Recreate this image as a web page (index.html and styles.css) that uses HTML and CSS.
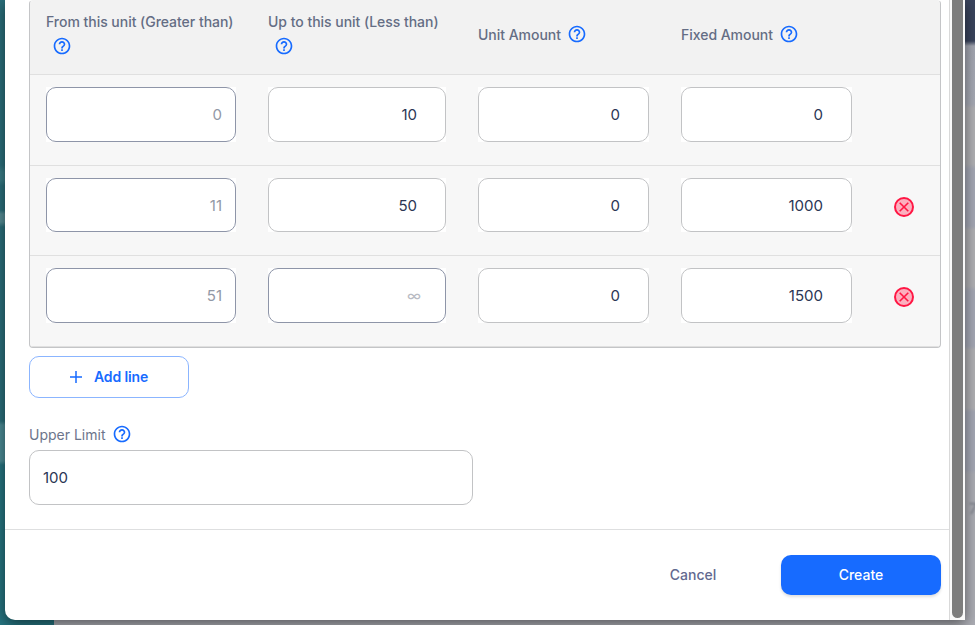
FILE: index.html
```html
<!DOCTYPE html>
<html lang="en">
<head>
<meta charset="utf-8">
<title>Pricing tiers</title>
<link rel="stylesheet" href="styles.css">
</head>
<body>
<svg class="sprite" aria-hidden="true">
  <symbol id="help" viewBox="0 0 24 24">
    <path d="M11 18h2v-2h-2v2zm1-16C6.48 2 2 6.48 2 12s4.480 10 10 10 10-4.480 10-10S17.520 2 12 2zm0 18c-4.410 0-8-3.590-8-8s3.590-8 8-8 8 3.590 8 8-3.590 8-8 8zm0-14c-2.210 0-4 1.790-4 4h2c0-1.100.900-2 2-2s2 .900 2 2c0 2-3 1.750-3 5h2c0-2.250 3-2.500 3-5 0-2.210-1.790-4-4-4z" fill="#176bff"/>
  </symbol>
  <symbol id="remove" viewBox="0 0 20 20">
    <circle cx="10" cy="10" r="9" fill="#fcb0bf" stroke="#ff1744" stroke-width="2"/>
    <path d="M5.700 5.700l8.600 8.600M14.300 5.700l-8.600 8.600" stroke="#ff1744" stroke-width="1.600"/>
  </symbol>
</svg>
<div class="backdrop">
  <div class="sidebar"></div>
  <div class="page"><span class="ghost">7</span></div>
</div>
<main class="modal">
  <div class="content">
    <section class="body">
      <div class="tiers">
        <div class="row head">
          <div class="th wrap"><span>From this unit (Greater than)</span><svg class="help"><use href="#help"/></svg></div>
          <div class="th wrap"><span>Up to this unit (Less than)</span><svg class="help"><use href="#help"/></svg></div>
          <div class="th"><span>Unit Amount</span><svg class="help"><use href="#help"/></svg></div>
          <div class="th"><span>Fixed Amount</span><svg class="help"><use href="#help"/></svg></div>
        </div>
        <div class="row">
          <div class="cell"><div class="field locked">0</div></div>
          <div class="cell"><div class="field">10</div></div>
          <div class="cell"><div class="field">0</div></div>
          <div class="cell"><div class="field">0</div></div>
        </div>
        <div class="row short">
          <div class="cell"><div class="field locked">11</div></div>
          <div class="cell"><div class="field">50</div></div>
          <div class="cell"><div class="field">0</div></div>
          <div class="cell"><div class="field">1000</div></div>
          <svg class="remove"><use href="#remove"/></svg>
        </div>
        <div class="row">
          <div class="cell"><div class="field locked">51</div></div>
          <div class="cell"><div class="field locked infinite">∞</div></div>
          <div class="cell"><div class="field">0</div></div>
          <div class="cell"><div class="field">1500</div></div>
          <svg class="remove"><use href="#remove"/></svg>
        </div>
      </div>
      <div class="add"><svg class="plus" viewBox="0 0 12 12"><path d="M6 0v12M0 6h12" stroke="#176bff" stroke-width="1.500"/></svg><span>Add line</span></div>
      <div class="label"><span>Upper Limit</span><svg class="help"><use href="#help"/></svg></div>
      <div class="limit">100</div>
    </section>
    <footer class="footer">
      <div class="cancel">Cancel</div>
      <div class="create">Create</div>
    </footer>
  </div>
  <div class="scrollbar"><div class="thumb"></div></div>
</main>
</body>
</html>
```
FILE: styles.css
```css
* { box-sizing: border-box; }
body {
  margin: 0;
  width: 975px;
  height: 625px;
  overflow: hidden;
  padding-left: 5px;
  font-family: Inter, "Liberation Sans", sans-serif;
  font-size: 14px;
  color: #2b3654;
}
.sprite { position: absolute; width: 0; height: 0; }
svg { display: block; flex: none; }
.backdrop { position: absolute; inset: 0; display: flex; z-index: -1; overflow: hidden; }
.sidebar {
  flex: none;
  width: 54px;
  background: linear-gradient(#2a6f7b 0 165px, #397d87 172px 180px, #2a6f7b 186px 210px, #558d95 214px 222px, #2a6f7b 227px 421px, #4b8b95 425px 461px, #267480 465px);
}
.page {
  flex: 1;
  min-width: 0;
  background: linear-gradient(#3a445d 0 41px, #a4a7b2 46px, #a7aab5 104px, #b0b0b4 108px 164px, #a5a8b5 169px 226px, #b0b0b4 230px 286px, #a5a8b5 291px 346px, #b0b0b4 350px 408px, #a5a8b5 412px 470px, #acadb4 474px);
}
.ghost { display: block; margin: 499px 0 0 915px; font-size: 15px; color: #737783; filter: blur(1px); }
.modal {
  display: flex;
  width: 960px;
  height: 620px;
  background: #fff;
  border-radius: 0 0 0 10px;
  overflow: hidden;
  box-shadow: 0 4px 14px rgba(0, 0, 0, .5);
}
.content { width: 944px; display: flex; flex-direction: column; }
.body { height: 530px; padding: 0 8px 0 24px; border-bottom: 1px solid #dedfe0; }
.tiers {
  height: 348px;
  border: 1px solid #c4c5c7;
  border-top-color: #f2f2f2;
  border-radius: 4px;
  overflow: hidden;
  background: #f7f7f7;
}
.row {
  display: grid;
  grid-template-columns: 190px 178px 171px 171px 20px;
  column-gap: 32px;
  height: 91px;
  padding: 12px 16px 23px;
  border-bottom: 1px solid #e0e0e0;
}
.row.short { height: 90px; }
.row.head { height: 74px; padding: 0 16px; background: #f2f2f2; }
.row.head .wrap { flex-direction: column; align-items: flex-start; padding-top: 11px; }
.th { display: flex; padding-top: 23px; font-weight: 500; color: #646d84; line-height: 20px; letter-spacing: -.03px; white-space: nowrap; }
.th .help { margin-left: 6px; }
.wrap .help { margin: 4px 0 0 6px; }
.help { width: 20px; height: 20px; }
.th:not(.wrap) span { padding-top: 1px; }
.cell { background: #fff; }
.field {
  display: flex;
  align-items: center;
  justify-content: flex-end;
  height: 100%;
  padding: 0 28px 0 13px;
  border: 1px solid #c2c3c5;
  border-radius: 10px;
  font-size: 15px;
}
.field.locked { padding-right: 13px; border-color: #8e95a8; color: #9298a6; }
.field.infinite { padding-right: 24px; color: #b8bbc3; }
.remove { width: 20px; height: 20px; margin: 19px 0 0 10px; }
.add {
  display: flex;
  align-items: center;
  gap: 12px;
  width: 160px;
  height: 42px;
  margin-top: 8px;
  padding-left: 40px;
  border: 1px solid #8bb5ff;
  border-radius: 10px;
  color: #176bff;
  font-weight: 600;
  letter-spacing: -.12px;
}
.add span { padding-bottom: 1px; }
.plus { width: 12px; height: 12px; }
.label { display: flex; height: 20px; margin-top: 26px; gap: 7px; color: #6c758b; line-height: 22px; }
.limit {
  display: flex;
  align-items: center;
  width: 444px;
  height: 55px;
  margin-top: 6px;
  padding-left: 13px;
  border: 1px solid #c2c3c5;
  border-radius: 10px;
  font-size: 15px;
}
.footer { display: flex; justify-content: flex-end; padding: 25px 8px 0 0; }
.cancel, .create { height: 40px; line-height: 40px; text-align: center; font-weight: 500; }
.cancel { width: 176px; color: #626990; }
.create { width: 160px; border-radius: 10px; background: #176bff; color: #fff; box-shadow: 0 2px 3px rgba(0, 0, 0, .13); }
.scrollbar { width: 16px; padding-left: 2px; background: #fafafa; border-left: 1px solid #d9d9d9; }
.thumb { width: 11px; height: 618px; background: #7d7d7d; border-radius: 0 0 6px 6px; }
```
